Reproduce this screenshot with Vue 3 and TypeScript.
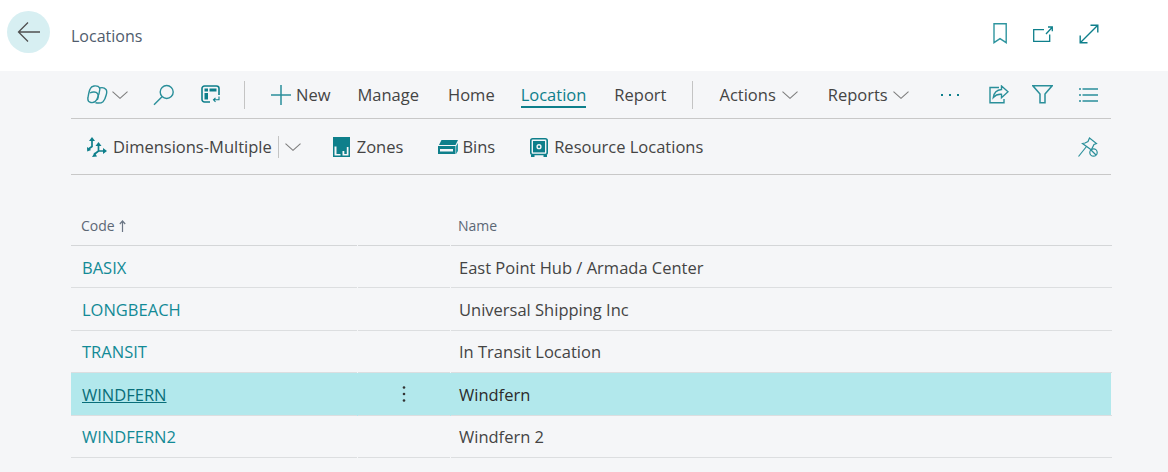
<script setup lang="ts">
interface Row { code: string; name: string; selected?: boolean }
const rows: Row[] = [
  { code: 'BASIX', name: 'East Point Hub / Armada Center' },
  { code: 'LONGBEACH', name: 'Universal Shipping Inc' },
  { code: 'TRANSIT', name: 'In Transit Location' },
  { code: 'WINDFERN', name: 'Windfern', selected: true },
  { code: 'WINDFERN2', name: 'Windfern 2' },
]
</script>

<template>
  <div class="page">
    <header class="top">
      <button class="back" aria-label="Back">
        <svg width="24" height="22" viewBox="0 0 24 22" fill="none" stroke="#505050" stroke-width="1.300"><path d="M1.500 11H23M11 1.500 1.500 11l9.500 9.500" /></svg>
      </button>
      <span class="title">Locations</span>
      <div class="top-icons">
        <svg width="14" height="21" viewBox="0 0 14 21" fill="none" stroke="#2e959f" stroke-width="1.400"><path d="M1 .7h12.200v19L7 15.600 1 19.700Z" /></svg>
        <svg width="20" height="16" viewBox="0 0 20 16" fill="none" stroke="#0e7f8b" stroke-width="1.300"><path d="M11 3.700H.7v11.600h16V8.500M13 8l6-6.500M15 1h4.300v4.200" /></svg>
        <svg width="20" height="20" viewBox="0 0 20 20" fill="none" stroke="#0e7f8b" stroke-width="1.400"><path d="M1.500 18.500l17-17M11.500 1.200h7.300v7.300M1.200 11.500v7.300h7.300" /></svg>
      </div>
    </header>

    <main class="content">
      <div class="bar bar-one">
        <svg class="ic" width="21" height="19" viewBox="0 0 21 19" fill="none" stroke="#2a8f9a" stroke-width="1.400"><path d="M7 1c3-.5 6 .5 5.800 3.500-.2 3-1.500 7-3 10-1.300 2.500-3.500 3.500-6 3-2.300-.5-3.300-2.500-2.800-5C1.500 9.500 2 6 3.200 3.800 4 2.200 5.500 1.300 7 1Z" /><path d="M12.500 3c2-.6 5-.4 6.500 1.500 1.200 1.500.8 3.500.2 5.500-.6 2.500-1.500 5-3.200 6.700-1.800 1.600-5 1.500-7.500 1" /><path d="M3 8c2.500-1.500 6-1.300 7.500.5 1.300 1.800.7 4.500-.2 6.500" /></svg>
        <svg class="chev c1" width="16" height="8" viewBox="0 0 16 8" fill="none" stroke="#7d7d7d" stroke-width="1.100"><path d="M.5.700 8 7.300 15.500.700" /></svg>
        <svg class="search" width="22" height="22" viewBox="0 0 22 22" fill="none" stroke="#2a8f9a" stroke-width="1.400"><circle cx="13.700" cy="8" r="6.500" /><path d="M9 12.700 1 20.800" /></svg>
        <svg class="panel" width="19" height="19" viewBox="0 0 19 19" fill="none"><path d="M18 10V3.500A2.500 2.500 0 0 0 15.500 1h-12A2.500 2.500 0 0 0 1 3.500v11A2.500 2.500 0 0 0 3.500 17H9" stroke="#0e7f8b" stroke-width="1.600" /><path d="M3.500 3.500H7v3H3.500zM8.500 3.500h7v3h-7zM3.500 8H7v6.500H3.500z" fill="#0e7f8b" /><path d="M18 11.500v3.300h-5.500M14.500 12.800l-2 2 2 2" stroke="#0e7f8b" stroke-width="1.100" /></svg>
        <span class="vr v1"></span>
        <svg class="plus" width="20" height="20" viewBox="0 0 20 20" stroke="#2a8f9a" stroke-width="1.500"><path d="M10 0v20M0 10h20" /></svg>
        <span class="cmd new">New</span>
        <span class="cmd manage">Manage</span>
        <span class="cmd home">Home</span>
        <span class="cmd location active">Location</span>
        <span class="cmd report">Report</span>
        <span class="vr v2"></span>
        <span class="cmd actions">Actions</span>
        <svg class="chev c2" width="16" height="8" viewBox="0 0 16 8" fill="none" stroke="#7d7d7d" stroke-width="1.100"><path d="M.5.700 8 7.300 15.500.700" /></svg>
        <span class="cmd reports">Reports</span>
        <svg class="chev c4" width="16" height="8" viewBox="0 0 16 8" fill="none" stroke="#7d7d7d" stroke-width="1.100"><path d="M.5.700 8 7.300 15.500.700" /></svg>
        <svg class="dots" width="18" height="4" viewBox="0 0 18 4" fill="#0e7f8b"><rect x="0" y="1" width="2" height="2" /><rect x="8" y="1" width="2" height="2" /><rect x="16" y="1" width="2" height="2" /></svg>
        <svg class="share" width="20" height="19" viewBox="0 0 20 19" fill="none" stroke="#2a8f9a" stroke-width="1.400"><path d="M10 2.500H1v15.300h14V14" /><path d="M12.500 1v3.500C8 4.800 5 7.500 4.300 12.500 6.500 10 9 9 12.500 9.300v3.400L19 6.800Z" /></svg>
        <svg class="filter" width="21" height="19" viewBox="0 0 21 19" fill="none" stroke="#2a8f9a" stroke-width="1.500"><path d="M.9.800h19.200L13 9v8.800H8V9Z" /></svg>
        <svg class="list" width="19" height="14" viewBox="0 0 19 14" stroke="#2a8f9a" stroke-width="1.500"><path d="M0 1h2M3.500 1H19M0 7h2M3.500 7H19M0 13h2M3.500 13H19" /></svg>
      </div>

      <div class="bar bar-two">
        <svg class="ic" width="20" height="20" viewBox="0 0 20 20" fill="none" stroke="#0e7f8b" stroke-width="1.700"><path d="M5 3v6.500L1.500 12M11.500 8v6l-4.500 3.500M11.500 14H17" /><path d="M5 0 8 4H2ZM0 10l.2 4.500 4-1.500ZM11.500 5 14.500 9h-6ZM20 14l-4-3v6ZM5 20l5-.5-2.300-4Z" fill="#0e7f8b" stroke="none" /></svg>
        <span class="cmd dim">Dimensions-Multiple</span>
        <span class="vr v3"></span>
        <svg class="chev c3" width="16" height="8" viewBox="0 0 16 8" fill="none" stroke="#7d7d7d" stroke-width="1.100"><path d="M.5.700 8 7.300 15.500.700" /></svg>
        <svg class="zones" width="17" height="20" viewBox="0 0 17 20"><path d="M0 0h17v20H0z" fill="#0e7f8b" /><path d="M1.500 9.500h2V18.500h-2zM3.500 17h4v1.500h-4zM15.500 10v8.500H9.500V14h1.800v3h2.500v-7z" fill="#f5f6f8" /></svg>
        <span class="cmd zt">Zones</span>
        <svg class="bins" width="20" height="14" viewBox="0 0 20 14"><path d="M3.500 0H20l-2.500 5H1z" fill="#0e7f8b" /><path d="M0 6h17.500v8H0z" fill="#0e7f8b" /><path d="M2 9h13v2.500H2z" fill="#f5f6f8" /><path d="M18 6l2-3v8l-2 3z" fill="#2a9aa5" /></svg>
        <span class="cmd bt">Bins</span>
        <svg class="res" width="18" height="19" viewBox="0 0 18 19" fill="none"><rect x=".8" y=".8" width="16.400" height="15.700" rx="2" stroke="#0e7f8b" stroke-width="1.600" /><path d="M1 17h3.500v2H1zM13.500 17H17v2h-3.500z" fill="#0e7f8b" /><rect x="3" y="3" width="12" height="11.400" fill="#0e7f8b" /><circle cx="9" cy="8.700" r="2.600" fill="#f5f6f8" /><circle cx="9" cy="8.700" r="1.200" fill="#0e7f8b" /></svg>
        <span class="cmd rt">Resource Locations</span>
        <svg class="pin" width="20" height="20" viewBox="0 0 20 20" fill="none" stroke="#2a8f9a" stroke-width="1.200"><path d="M11.500 1 18.500 6.500 16 7.500 14 11.500 13.500 13 4.500 6.500 7 6 10 4.500Z" /><path d="M8.500 9.500.5 19.500" /><circle cx="15.500" cy="15.500" r="3.700" /><path d="M13 13l5 5" /></svg>
      </div>

      <section class="grid">
        <div class="head">
          <div class="th">Code <svg width="7" height="12" viewBox="0 0 7 12" fill="none" stroke="#6b7685" stroke-width="1.200"><path d="M3.500 12V1M.8 4 3.500 1l2.700 3" /></svg></div>
          <div class="th"></div>
          <div class="th name-head">Name</div>
        </div>
        <div v-for="r in rows" :key="r.code" class="row" :class="{ selected: r.selected }">
          <div class="td code"><a>{{ r.code }}</a></div>
          <div class="td more">
            <svg v-if="r.selected" width="4" height="18" viewBox="0 0 4 18" fill="#333"><circle cx="2" cy="2.500" r="1.300" /><circle cx="2" cy="9" r="1.300" /><circle cx="2" cy="15.500" r="1.300" /></svg>
          </div>
          <div class="td name">{{ r.name }}</div>
        </div>
      </section>
    </main>
  </div>
</template>

<style>
html, body { margin: 0; background: #f5f6f8; }
</style>

<style scoped>
.page {
  width: 1168px;
  height: 472px;
  overflow: hidden;
  background: #f5f6f8;
  font-family: "Open Sans", "Noto Sans", sans-serif;
  color: #333;
}
svg { display: block; flex: none; }
.top {
  height: 71px;
  background: #fff;
  display: flex;
  align-items: flex-start;
  padding-left: 7px;
}
.back {
  width: 43px;
  height: 42px;
  margin-top: 11px;
  padding: 0;
  border: 0;
  border-radius: 50%;
  background: #d7eff2;
  display: flex;
  align-items: center;
  justify-content: center;
}
.title {
  margin: 24px 0 0 21px;
  font-size: 16px;
  line-height: 24px;
  color: #505c6d;
}
.top-icons {
  margin-left: auto;
  margin-right: 69px;
  margin-top: 23px;
  display: flex;
  align-items: center;
  gap: 26px;
}
.content { padding: 0 57px 0 71px; }
.bar {
  display: flex;
  align-items: center;
  border-bottom: 1px solid #c8c8c8;
  padding-left: 16px;
}
.bar-one { height: 47px; }
.bar-two { height: 54px; padding-top: 1px; }
.cmd {
  font-size: 16.500px;
  line-height: 24px;
  color: #444;
  white-space: nowrap;
}
.vr { width: 1px; background: #c4c4c4; flex: none; }
.v1 { height: 28px; margin-left: 24px; }
.v2 { height: 28px; margin-left: 26px; }
.v3 { height: 22px; margin-left: 6px; }
.c1 { margin-left: 4px; }
.c2 { margin-left: 6px; }
.c3 { margin-left: 6px; }
.c4 { margin-left: 5px; }
.search { margin-left: 25px; }
.panel { margin-left: 26px; }
.plus { margin-left: 26px; }
.new { margin-left: 5px; }
.manage { margin-left: 27px; }
.home { margin-left: 29px; }
.location { margin-left: 26px; position: relative; }
.report { margin-left: 28px; }
.actions { margin-left: 26px; }
.reports { margin-left: 30px; }
.zt { margin-left: 7px; }
.bt { margin-left: 4px; }
.rt { margin-left: 6px; }
.active { color: #0e7f8b; }
.active::after {
  content: "";
  position: absolute;
  left: 0;
  right: 0;
  bottom: -1px;
  height: 2px;
  background: #0e7f8b;
}
.dots { margin-left: 32px; }
.share { margin-left: 30px; }
.filter { margin-left: 23px; }
.list { margin-left: 26px; }
.dim { margin-left: 6px; }
.zones { margin-left: 32px; }
.bins { margin-left: 35px; }
.res { margin-left: 35px; }
.pin { margin-left: auto; margin-right: 13px; }
.grid { margin-top: 31px; }
.head, .row {
  display: grid;
  grid-template-columns: 286px 92px 661px;
  column-gap: 1px;
}
.th {
  height: 39px;
  padding: 0 0 0 10px;
  font-size: 14px;
  line-height: 18px;
  color: #5c6775;
  border-bottom: 1px solid #d4d6d8;
  display: flex;
  align-items: center;
  gap: 4px;
}
.name-head { padding-left: 7px; }
.td {
  box-sizing: border-box;
  height: 42.400px;
  padding-top: 1px;
  border-bottom: 1px solid #dcdee0;
  display: flex;
  align-items: center;
  font-size: 16.500px;
}
.code { padding-left: 11px; color: #128a96; }
.more { justify-content: center; }
.name { padding-left: 8px; color: #444; }
.selected { background: #b2e8ec; }
.selected .code { color: #086e79; }
.selected .code a { text-decoration: underline; }
.selected .name { color: #2b2b2b; }
</style>
